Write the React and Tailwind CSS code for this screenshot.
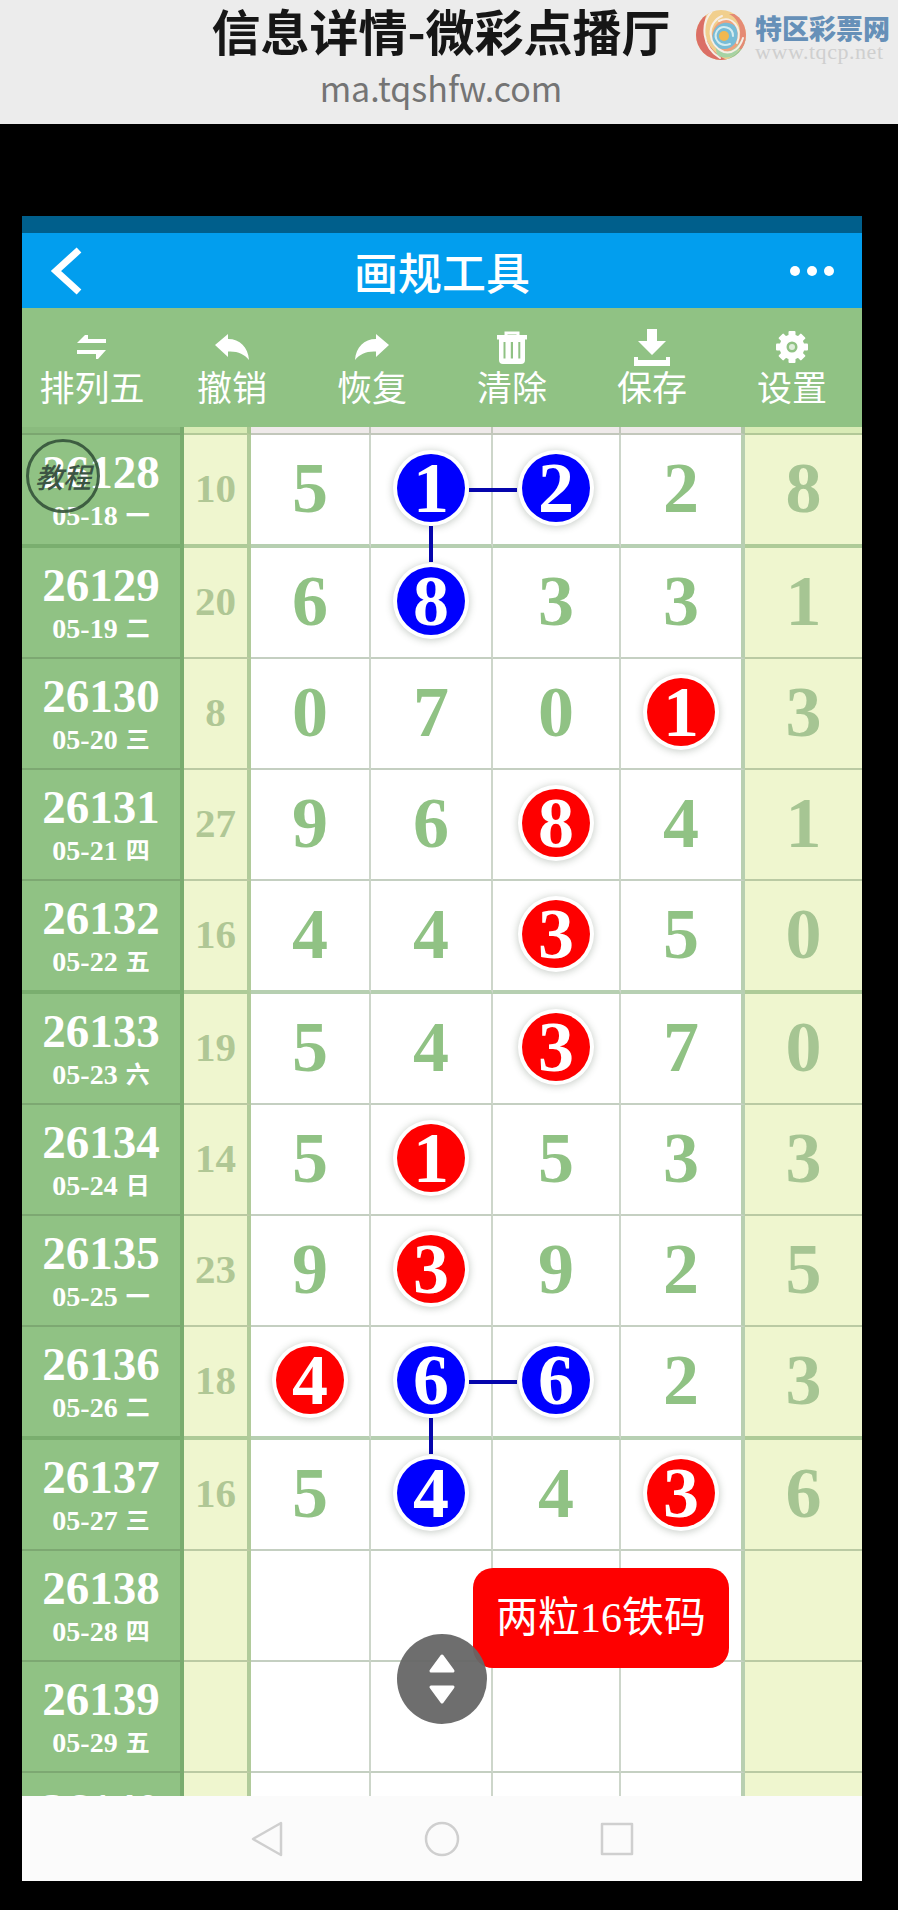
const draws = [
  { issue: '26128', date: '05-18', day: '一', sum: 10, nums: [5, 1, 2, 2, 8], heavy: true },
  { issue: '26129', date: '05-19', day: '二', sum: 20, nums: [6, 8, 3, 3, 1] },
  { issue: '26130', date: '05-20', day: '三', sum: 8, nums: [0, 7, 0, 1, 3] },
  { issue: '26131', date: '05-21', day: '四', sum: 27, nums: [9, 6, 8, 4, 1] },
  { issue: '26132', date: '05-22', day: '五', sum: 16, nums: [4, 4, 3, 5, 0], heavy: true },
  { issue: '26133', date: '05-23', day: '六', sum: 19, nums: [5, 4, 3, 7, 0] },
  { issue: '26134', date: '05-24', day: '日', sum: 14, nums: [5, 1, 5, 3, 3] },
  { issue: '26135', date: '05-25', day: '一', sum: 23, nums: [9, 3, 9, 2, 5] },
  { issue: '26136', date: '05-26', day: '二', sum: 18, nums: [4, 6, 6, 2, 3], heavy: true },
  { issue: '26137', date: '05-27', day: '三', sum: 16, nums: [5, 4, 4, 3, 6] },
  { issue: '26138', date: '05-28', day: '四', sum: '', nums: ['', '', '', '', ''] },
  { issue: '26139', date: '05-29', day: '五', sum: '', nums: ['', '', '', '', ''] },
  { issue: '26140', date: '05-30', day: '六', sum: '', nums: ['', '', '', '', ''] },
];

// key = issue-column, right/down are the lines drawn towards the next ball
const marks = {
  '26128-1': { color: 'blue', right: true, down: true },
  '26128-2': { color: 'blue' },
  '26129-1': { color: 'blue' },
  '26130-3': { color: 'red' },
  '26131-2': { color: 'red' },
  '26132-2': { color: 'red' },
  '26133-2': { color: 'red' },
  '26134-1': { color: 'red' },
  '26135-1': { color: 'red' },
  '26136-0': { color: 'red' },
  '26136-1': { color: 'blue', right: true, down: true },
  '26136-2': { color: 'blue' },
  '26137-1': { color: 'blue' },
  '26137-3': { color: 'red' },
};

const cellEdges = ['border-r-2', 'border-r-2', 'border-r-2', 'border-r-4', 'border-r-0'];

const SwapIcon = () => (
  <svg viewBox="0 0 30 24" className="h-6 w-[30px]" fill="currentColor">
    <path d="M0 8 L8 0 H11 V4 H29 V8 H0Z M0 15 H29 L21 24 H19 V19 H0Z" />
  </svg>
);

const UndoIcon = () => (
  <svg viewBox="0 0 34 26" className="h-[26px] w-[34px]" fill="currentColor">
    <path d="M0 11 L13 0 V5 C25 5 33 13 34 26 C29 20 23 17 13 17.5 V23Z" />
  </svg>
);

const RedoIcon = () => (
  <svg viewBox="0 0 34 26" className="h-[26px] w-[34px]" fill="currentColor">
    <path d="M34 11 L21 0 V5 C9 5 1 13 0 26 C5 20 11 17 21 17.5 V23Z" />
  </svg>
);

const TrashIcon = () => (
  <svg viewBox="0 0 30 33" className="h-[33px] w-[30px]" fill="currentColor">
    <path d="M9 4.5 V2 H21 V4.5" fill="none" stroke="currentColor" strokeWidth="3" />
    <path d="M0 4 H30 V8.5 H0Z" />
    <path
      fillRule="evenodd"
      d="M2 8 H28 V29 Q28 33 24 33 H6 Q2 33 2 29Z M6.5 11 V27.5 H8.5 V11Z M13.8 11 V27.5 H16 V11Z M21.3 11 V27.5 H23.3 V11Z"
    />
  </svg>
);

const SaveIcon = () => (
  <svg viewBox="0 0 36 37" className="h-[37px] w-9" fill="currentColor">
    <path d="M13 0 H23 V12 H32 L18 26 L4 12 H13Z M0 28 H4 V31 H32 V28 H36 V37 H0Z" />
  </svg>
);

const GearIcon = () => (
  <svg viewBox="0 0 32 32" className="h-8 w-8" fill="currentColor">
    {[0, 45, 90, 135, 180, 225, 270, 315].map(a => (
      <rect key={a} x="12.5" y="0" width="7" height="9" rx="1" transform={`rotate(${a} 16 16)`} />
    ))}
    <circle cx="16" cy="16" r="9" fill="none" stroke="currentColor" strokeWidth="7" />
    <circle cx="16" cy="16" r="3" opacity="0.7" />
  </svg>
);

const tools = [
  { label: '排列五', Icon: SwapIcon },
  { label: '撤销', Icon: UndoIcon },
  { label: '恢复', Icon: RedoIcon },
  { label: '清除', Icon: TrashIcon },
  { label: '保存', Icon: SaveIcon },
  { label: '设置', Icon: GearIcon },
];

function SwirlLogo() {
  return (
    <svg viewBox="0 0 52 52" className="h-[52px] w-[52px]" fill="none" strokeLinecap="round">
      <clipPath id="disc">
        <circle cx="26" cy="27" r="25" />
      </clipPath>
      <g clipPath="url(#disc)">
        <rect width="52" height="52" fill="#f1cf8d" />
        <path d="M14 0 C4 20 10 42 32 52 H0 V0Z" fill="#db6f66" />
        <path d="M30 52 C44 46 52 36 52 22 V52Z" fill="#8cc79a" />
        <path d="M34 6 C47 12 48 30 40 42 L52 40 V6Z" fill="#e58a74" />
        <path d="M24 14 C12 24 16 42 32 47 C44 42 48 28 42 18 C36 10 30 10 24 14Z" fill="#f0a27c" />
        <path d="M20 36 C22 46 38 48 46 32 C46 46 34 54 22 47Z" fill="#a5d3a4" />
        <path d="M18 36 C14 20 28 9 40 18 C46 26 42 40 30 41 C24 41 20 40 18 36Z" fill="#78bcd6" />
        <path d="M17 3 C5 16 7 39 25 50" stroke="#f6eee6" strokeWidth="2" />
        <path d="M27 8 C11 15 12 37 29 44 C38 46 45 40 48 30" stroke="#f6eee6" strokeWidth="2" />
        <path d="M24 13 C37 6 48 20 42 35" stroke="#f6eee6" strokeWidth="2" />
        <path d="M35 36 C24 40 18 30 22 23 C27 16 38 19 38 28" stroke="#d5ecef" strokeWidth="2" />
        <circle cx="29" cy="28" r="5" fill="#f1b850" />
      </g>
    </svg>
  );
}

function Ball({ value, mark }) {
  return (
    <span
      className={`relative inline-flex h-[68px] w-[68px] items-center justify-center rounded-full text-white shadow-[0_0_0_4px_#fff,0_1px_7px_5px_rgba(60,80,60,0.25)] ${mark.color === 'blue' ? 'bg-[#0000fe]' : 'bg-[#fe0000]'}`}
    >
      {value}
      {mark.right && <span className="absolute top-1/2 left-full z-10 ml-1 h-1 w-[48px] bg-[#0505ac]"></span>}
      {mark.down && <span className="absolute top-full left-8 z-10 mt-1 h-9 w-1 bg-[#0505ac]"></span>}
    </span>
  );
}

function DrawRow({ draw }) {
  const line = draw.heavy ? 'border-b-4 border-b-[#5f9655]/45' : 'border-b-2 border-b-[#5a7850]/35';
  return (
    <tr className={draw.heavy ? 'h-[113px]' : 'h-[111px]'}>
      <th scope="row" className={`border-r-4 border-r-[#6d9f62]/60 bg-[#90c284] p-0 pt-2 text-white ${line}`}>
        <div className="text-[47px] leading-[44px]">{draw.issue}</div>
        <div className="flex items-center justify-center gap-2 text-[28px] leading-[44px]">
          {draw.date}
          <span className="text-2xl leading-[44px]">{draw.day}</span>
        </div>
      </th>
      <td className={`border-r-4 border-r-[#7fa872]/55 bg-[#eff6cf] p-0 pb-1 text-[41px] leading-[44px] text-[#b0c795] ${line}`}>{draw.sum}</td>
      {draw.nums.map((n, i) => {
        const mark = marks[`${draw.issue}-${i}`];
        return (
          <td
            key={i}
            className={`p-0 pb-1 text-[72px] leading-[68px] ${cellEdges[i]} ${i === 3 ? 'border-r-[#7fa872]/55' : 'border-r-[#5a7850]/30'} ${i === 4 ? 'bg-[#eff6cf] text-[#a6c593]' : 'text-[#90c284]'} ${line}`}
          >
            <div className="flex h-[68px] items-center justify-center">
              {mark ? <Ball value={n} mark={mark} /> : n}
            </div>
          </td>
        );
      })}
    </tr>
  );
}

export default function App() {
  return (
    <div className="flex h-screen flex-col bg-black font-['Noto_Sans_CJK_SC',sans-serif]">
      <header className="relative h-[124px] shrink-0 bg-[#ececec] pr-4 text-center">
        <h1 className="text-[49px] leading-[60px] font-bold text-[#161616]">信息详情-微彩点播厅</h1>
        <p className="text-[34px] leading-[56px] text-[#747474]">ma.tqshfw.com</p>
        <div className="absolute top-2 right-2 flex items-center gap-2">
          <SwirlLogo />
          <div className="pt-1 text-left">
            <div className="text-[27px] leading-[32px] font-black text-[#6690b8]">特区彩票网</div>
            <div className="font-['Liberation_Serif',serif] text-[22px] leading-[16px] tracking-wide text-[#cfcfcf]">www.tqcp.net</div>
          </div>
        </div>
      </header>

      <main className="mt-[92px] mr-9 mb-[29px] ml-[22px] flex min-h-0 flex-1 flex-col bg-white">
        <div className="h-[17px] shrink-0 bg-[#005f8c]"></div>
        <div className="flex h-[75px] shrink-0 items-center justify-between bg-[#029eee] px-7 text-white">
          <button aria-label="返回" className="w-12">
            <svg viewBox="0 0 32 48" className="h-12 w-8" fill="none" stroke="currentColor" strokeWidth="7">
              <path d="M29 3 L6 24 L29 45" />
            </svg>
          </button>
          <h2 className="text-[44px] leading-[60px] font-medium">画规工具</h2>
          <button aria-label="更多" className="flex w-12 items-center justify-end gap-[7px]">
            <span className="h-[10px] w-[10px] shrink-0 rounded-full bg-white"></span>
            <span className="h-[10px] w-[10px] shrink-0 rounded-full bg-white"></span>
            <span className="h-[10px] w-[10px] shrink-0 rounded-full bg-white"></span>
          </button>
        </div>

        <nav className="grid h-[119px] shrink-0 grid-cols-6 bg-[#90c284] pt-[18px] text-white">
          {tools.map(({ label, Icon }) => (
            <button key={label} className="flex flex-col items-center">
              <span className="flex h-[42px] items-center justify-center"><Icon /></span>
              <span className="text-[35px] leading-[36px] whitespace-nowrap">{label}</span>
            </button>
          ))}
        </nav>

        <div className="relative min-h-0 flex-1 overflow-hidden">
          <table className="w-full table-fixed border-separate border-spacing-0 text-center font-['Liberation_Serif','Noto_Sans_CJK_SC',serif] font-bold">
            <colgroup>
              <col className="w-[162px]" />
              <col className="w-[67px]" />
              <col className="w-[120px]" />
              <col className="w-[122px]" />
              <col className="w-[128px]" />
              <col className="w-[124px]" />
              <col className="w-[117px]" />
            </colgroup>
            <tbody>
              <tr className="h-2">
                <td className="border-r-4 border-b-2 border-r-[#6d9f62]/60 border-b-[#5a7850]/30 bg-[#8abb7e] p-0"></td>
                <td className="border-r-4 border-b-2 border-r-[#7fa872]/55 border-b-[#5a7850]/30 bg-[#d9ebb6] p-0"></td>
                <td className="border-r-2 border-b-2 border-[#5a7850]/30 bg-[#efeaea] p-0"></td>
                <td className="border-r-2 border-b-2 border-[#5a7850]/30 bg-[#efeaea] p-0"></td>
                <td className="border-r-2 border-b-2 border-[#5a7850]/30 bg-[#efeaea] p-0"></td>
                <td className="border-r-4 border-b-2 border-r-[#7fa872]/55 border-b-[#5a7850]/30 bg-[#efeaea] p-0"></td>
                <td className="border-b-2 border-[#5a7850]/30 bg-[#d9ebb6] p-0"></td>
              </tr>
              {draws.map(draw => <DrawRow key={draw.issue} draw={draw} />)}
            </tbody>
          </table>

          {/* Floating controls */}
          <button className="absolute top-3 left-1 z-20 flex h-[74px] w-[74px] items-center justify-center rounded-full border-3 border-[#34533a]/90 text-[28px] leading-8 font-medium whitespace-nowrap text-[#3c5444] italic">
            教程
          </button>
          <div className="absolute top-[1141px] left-[451px] z-20 rounded-[20px] bg-[#fe0000] px-[23px] py-5 font-['Liberation_Serif','Noto_Sans_CJK_SC',serif] text-[42px] leading-[60px] whitespace-nowrap text-white">
            两粒16铁码
          </div>
          <button aria-label="滚动" className="absolute top-[1207px] left-[375px] z-20 flex h-[90px] w-[90px] items-center justify-center rounded-full bg-[#666]/95 text-white">
            <svg viewBox="0 0 28 52" className="h-[52px] w-7" fill="currentColor" stroke="currentColor" strokeWidth="3" strokeLinejoin="round">
              <path d="M14 3 L25 18 H3Z M14 49 L25 34 H3Z" />
            </svg>
          </button>
        </div>

        <footer className="flex h-[85px] shrink-0 items-center justify-center bg-[#fbfbfb] text-[#cfcfcf]">
          <button aria-label="后退" className="flex w-[175px] justify-center">
            <svg viewBox="0 0 36 36" className="h-9 w-9" fill="none" stroke="currentColor" strokeWidth="2.5" strokeLinejoin="round">
              <path d="M32 2 V34 L4 18Z" />
            </svg>
          </button>
          <button aria-label="主页" className="flex w-[175px] justify-center">
            <svg viewBox="0 0 36 36" className="h-9 w-9" fill="none" stroke="currentColor" strokeWidth="2.5">
              <circle cx="18" cy="18" r="16" />
            </svg>
          </button>
          <button aria-label="最近任务" className="flex w-[175px] justify-center">
            <svg viewBox="0 0 36 36" className="h-9 w-9" fill="none" stroke="currentColor" strokeWidth="2.5" strokeLinejoin="round">
              <rect x="3" y="3" width="30" height="30" />
            </svg>
          </button>
        </footer>
      </main>
    </div>
  );
}
